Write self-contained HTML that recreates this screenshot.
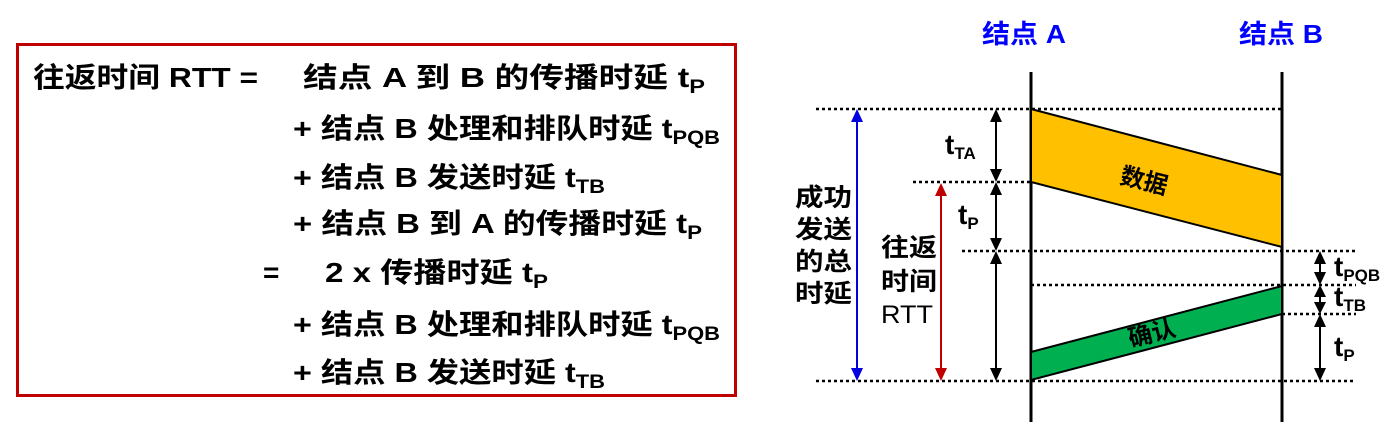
<!DOCTYPE html>
<html><head><meta charset="utf-8"><style>
body{margin:0;background:#fff;width:1396px;height:422px;overflow:hidden}
svg{display:block}
text{font-family:"Liberation Sans","Noto Sans CJK SC",sans-serif;font-weight:bold}
</style></head><body>
<svg width="1396" height="422" xmlns="http://www.w3.org/2000/svg">
<rect x="17.5" y="44.5" width="718" height="351" fill="none" stroke="#c00000" stroke-width="3"/>
<g font-size="28" fill="#000">
<text x="33" y="87" textLength="225" lengthAdjust="spacingAndGlyphs">往返时间 RTT =</text>
<text x="303" y="87" textLength="402" lengthAdjust="spacingAndGlyphs">结点 A 到 B 的传播时延 t<tspan font-size="19" dy="6">P</tspan></text>
<text x="293" y="138" textLength="427" lengthAdjust="spacingAndGlyphs">+ 结点 B 处理和排队时延 t<tspan font-size="19" dy="6">PQB</tspan></text>
<text x="293" y="187" textLength="312" lengthAdjust="spacingAndGlyphs">+ 结点 B 发送时延 t<tspan font-size="19" dy="6">TB</tspan></text>
<text x="293" y="233" textLength="409" lengthAdjust="spacingAndGlyphs">+ 结点 B 到 A 的传播时延 t<tspan font-size="19" dy="6">P</tspan></text>
<text x="263" y="282">=</text>
<text x="325" y="282" textLength="223" lengthAdjust="spacingAndGlyphs">2 x 传播时延 t<tspan font-size="19" dy="6">P</tspan></text>
<text x="293" y="334" textLength="427" lengthAdjust="spacingAndGlyphs">+ 结点 B 处理和排队时延 t<tspan font-size="19" dy="6">PQB</tspan></text>
<text x="293" y="382" textLength="312" lengthAdjust="spacingAndGlyphs">+ 结点 B 发送时延 t<tspan font-size="19" dy="6">TB</tspan></text>
</g>
<g font-size="26" fill="#0000ff">
<text x="982" y="43" textLength="84" lengthAdjust="spacingAndGlyphs">结点 A</text>
<text x="1239" y="43" textLength="84" lengthAdjust="spacingAndGlyphs">结点 B</text>
</g>
<line x1="1031" y1="72" x2="1031" y2="422" stroke="#000" stroke-width="3"/>
<line x1="1282" y1="72" x2="1282" y2="422" stroke="#000" stroke-width="3"/>
<g stroke="#000" stroke-width="2.5" stroke-dasharray="3,3">
<line x1="816" y1="109" x2="1282" y2="109"/>
<line x1="913" y1="182" x2="1031" y2="182"/>
<line x1="962" y1="251" x2="1356" y2="251"/>
<line x1="1031" y1="285" x2="1356" y2="285"/>
<line x1="1282" y1="314" x2="1356" y2="314"/>
<line x1="816" y1="381" x2="1356" y2="381"/>
</g>
<polygon points="1031,109 1282,175 1282,247 1031,182" fill="#ffc000" stroke="#000" stroke-width="2"/>
<polygon points="1031,352 1282,286 1282,314 1031,380" fill="#00b050" stroke="#000" stroke-width="2"/>
<text x="1120" y="190" font-size="24" fill="#000" transform="rotate(14 1148 182)">数据</text>
<text x="1128" y="342" font-size="24" fill="#000" transform="rotate(-14 1150 334)">确认</text>
<g stroke-width="2">
<line x1="857" y1="115" x2="857" y2="375" stroke="#0000e0"/>
<polygon points="851,122 857,109 863,122" fill="#0000e0"/>
<polygon points="851,368 857,381 863,368" fill="#0000e0"/>
<line x1="941" y1="188" x2="941" y2="375" stroke="#c00000"/>
<polygon points="935,196 941,183 947,196" fill="#c00000"/>
<polygon points="935,368 941,381 947,368" fill="#c00000"/>
</g>
<g stroke="#000" stroke-width="2" fill="#000">
<line x1="996" y1="115" x2="996" y2="176"/>
<polygon points="990,122 996,109 1002,122" stroke="none"/><polygon points="990,169 996,182 1002,169" stroke="none"/>
<line x1="996" y1="188" x2="996" y2="245"/>
<polygon points="990,195 996,182 1002,195" stroke="none"/><polygon points="990,238 996,251 1002,238" stroke="none"/>
<line x1="996" y1="257" x2="996" y2="375"/>
<polygon points="990,264 996,251 1002,264" stroke="none"/><polygon points="990,368 996,381 1002,368" stroke="none"/>
<line x1="1320" y1="257" x2="1320" y2="279"/>
<polygon points="1314,264 1320,251 1326,264" stroke="none"/><polygon points="1314,272 1320,285 1326,272" stroke="none"/>
<line x1="1320" y1="291" x2="1320" y2="308"/>
<polygon points="1314,297 1320,285 1326,297" stroke="none"/><polygon points="1314,302 1320,314 1326,302" stroke="none"/>
<line x1="1320" y1="320" x2="1320" y2="375"/>
<polygon points="1314,327 1320,314 1326,327" stroke="none"/><polygon points="1314,368 1320,381 1326,368" stroke="none"/>
</g>
<g font-size="25" fill="#000">
<text x="795" y="206" textLength="57" lengthAdjust="spacingAndGlyphs">成功</text>
<text x="795" y="238" textLength="57" lengthAdjust="spacingAndGlyphs">发送</text>
<text x="795" y="270" textLength="57" lengthAdjust="spacingAndGlyphs">的总</text>
<text x="795" y="302" textLength="57" lengthAdjust="spacingAndGlyphs">时延</text>
<text x="881" y="256" textLength="56" lengthAdjust="spacingAndGlyphs">往返</text>
<text x="881" y="290" textLength="56" lengthAdjust="spacingAndGlyphs">时间</text>
<text x="881" y="323" textLength="52" lengthAdjust="spacingAndGlyphs" style="font-weight:normal">RTT</text>
<g style="font-weight:normal" font-size="28">
<text x="945" y="154">t<tspan font-size="17" dy="5" style="font-weight:bold">TA</tspan></text>
<text x="958" y="224">t<tspan font-size="17" dy="5" style="font-weight:bold">P</tspan></text>
<text x="1334" y="276">t<tspan font-size="17" dy="5" style="font-weight:bold">PQB</tspan></text>
<text x="1334" y="306">t<tspan font-size="17" dy="5" style="font-weight:bold">TB</tspan></text>
<text x="1334" y="356">t<tspan font-size="17" dy="5" style="font-weight:bold">P</tspan></text>
</g>
</g>
</svg>
</body></html>
